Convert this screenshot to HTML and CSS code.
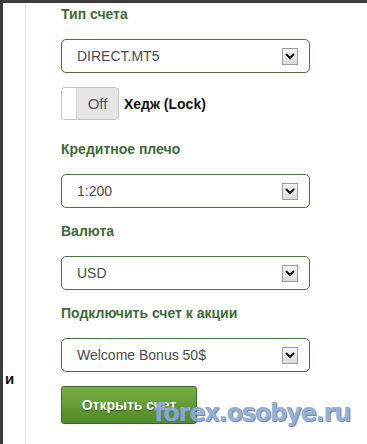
FILE: index.html
```html
<html>
<head>
    <title>Открыть счет</title>
    <link rel="stylesheet" href="styles.css">
</head>
<body>
    <div class="frame">
        <div class="side">
            <span class="cut">и</span>
        </div>

        <div class="form">
            <div class="label">Тип счета</div>
            <div class="select">
                <span>DIRECT.MT5</span>
                <span class="arrow"><svg width="14" height="14" viewBox="0 0 14 14"><polyline points="3,5 7,9 11,5" fill="none" stroke="#111" stroke-width="2"/></svg></span>
            </div>

            <div class="hedge">
                <div class="toggle">
                    <span class="knob"></span>
                    <span class="state">Off</span>
                </div>
                <b>Хедж (Lock)</b>
            </div>

            <div class="label">Кредитное плечо</div>
            <div class="select">
                <span>1:200</span>
                <span class="arrow"><svg width="14" height="14" viewBox="0 0 14 14"><polyline points="3,5 7,9 11,5" fill="none" stroke="#111" stroke-width="2"/></svg></span>
            </div>

            <div class="label">Валюта</div>
            <div class="select">
                <span>USD</span>
                <span class="arrow"><svg width="14" height="14" viewBox="0 0 14 14"><polyline points="3,5 7,9 11,5" fill="none" stroke="#111" stroke-width="2"/></svg></span>
            </div>

            <div class="label">Подключить счет к акции</div>
            <div class="select">
                <span>Welcome Bonus 50$</span>
                <span class="arrow"><svg width="14" height="14" viewBox="0 0 14 14"><polyline points="3,5 7,9 11,5" fill="none" stroke="#111" stroke-width="2"/></svg></span>
            </div>

            <div class="submit">
                <div class="button">Открыть счет</div>
                <div class="mark">forex.osobye.ru</div>
            </div>
        </div>
    </div>
</body>
</html>
```

FILE: styles.css
```css
body { margin: 0; font-family: "Liberation Sans", Arial, sans-serif; font-size: 14px; background: #fff; }
.frame { display: flex; height: 441px; border-top: solid 3px #3b3b3b; border-left: solid 3px #3b3b3b; }
.side { width: 22px; border-right: solid 1px #e3e3e3; overflow: hidden; }
.cut { display: block; margin-top: 367px; margin-left: 2px; font-weight: bold; font-size: 15px; color: #111; }
.form { width: 249px; padding-left: 35px; padding-top: 2px; }
.label { height: 18px; line-height: 18px; margin-bottom: 16px; font-weight: bold; color: #3e6a36; }
.select { display: flex; align-items: center; justify-content: space-between; height: 32px; margin-bottom: 14px; padding: 0 11px 0 15px; border: solid 1px #4b7443; border-radius: 5px; color: #4a4a4a; font-size: 14px; }
.arrow { display: flex; align-items: center; justify-content: center; width: 14px; height: 15px; border: solid 1px #9c9c9c; background: linear-gradient(#f6f6f6, #dcdcdc); }
.hedge { display: flex; align-items: center; gap: 5px; margin-top: 1px; margin-bottom: 20px; color: #111; }
.toggle { display: flex; width: 56px; height: 31px; border: solid 1px #c6c6c6; border-radius: 4px; background: #e6e6e6; overflow: hidden; }
.knob { width: 14px; background: #fff; border-right: solid 1px #d0d0d0; }
.state { flex: 1; display: flex; align-items: center; justify-content: center; color: #555; font-size: 15px; }
.submit { position: relative; }
.button { width: 134px; height: 36px; line-height: 36px; text-align: center; border: solid 1px #3d6b1f; border-radius: 3px; background: linear-gradient(#78ad44, #4f8b27); color: #fff; font-weight: bold; text-shadow: 0 1px 1px #2f5415; }
.mark { position: absolute; left: 93px; top: 13px; font-family: "DejaVu Sans", sans-serif; font-weight: bold; font-size: 24px; letter-spacing: -1.2px; color: #8cabd3; text-shadow: 1px 1px 1px #61779a; opacity: 0.92; }
```
